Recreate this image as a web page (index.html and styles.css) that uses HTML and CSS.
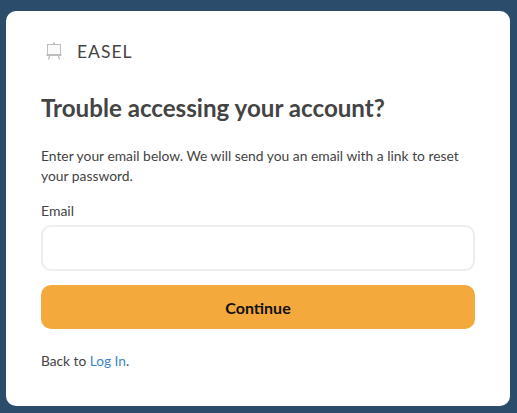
FILE: index.html
```html
<!DOCTYPE html>
<html lang="en">
  <head>
    <meta charset="UTF-8" />
    <title>Trouble accessing your account?</title>
    <link rel="stylesheet" href="styles.css">
  </head>
  <body>
    <div class="card">
      <div class="brand">
        <svg class="brand-icon" width="18" height="20" viewBox="0 0 18 20">
          <rect x="1.5" y="3.5" width="13" height="10" fill="#fafafa" stroke="#bdbdbd" />
          <rect x="7" y="1.5" width="2" height="2" fill="#bdbdbd" />
          <rect x="0.5" y="13" width="15" height="2" fill="#bdbdbd" />
          <path d="M3.5 15 L2.5 18.5 M12.5 15 L13.5 18.5" stroke="#bdbdbd" stroke-width="1.3" fill="none" />
        </svg>
        <span class="brand-name">EASEL</span>
      </div>
      <h1>Trouble accessing your account?</h1>
      <p class="intro">Enter your email below. We will send you an email with a link to reset your password.</p>
      <form>
        <label for="email">Email</label>
        <input type="email" id="email" />
        <button type="button" class="button">Continue</button>
      </form>
      <p class="back">Back to <a href="#">Log In</a>.</p>
    </div>
  </body>
</html>
```

FILE: styles.css
```css
html,
body {
  height: 100%;
}
body {
  font-family: Lato, sans-serif;
  background-color: #2c4c6b;
  color: #444444;
  margin: 0;
  padding: 11px 7px 7px 6px;
  box-sizing: border-box;
}
.card {
  background-color: #ffffff;
  border-radius: 10px;
  padding: 27px 35px 0 35px;
  height: 395px;
  box-sizing: border-box;
}
.brand {
  display: flex;
  align-items: center;
  height: 26px;
  padding-left: 5px;
}
.brand-icon {
  margin-right: 13px;
}
.brand-name {
  font-size: 17.5px;
  letter-spacing: 1px;
}
h1 {
  font-size: 24.15px;
  font-weight: 700;
  line-height: 30px;
  margin: 29px 0 0 0;
}
.intro {
  font-size: 13.85px;
  line-height: 20px;
  margin: 23px 0 0 0;
}
label {
  display: block;
  font-size: 14px;
  line-height: 18px;
  margin-top: 16px;
}
input {
  display: block;
  width: 100%;
  height: 46px;
  box-sizing: border-box;
  margin-top: 5px;
  border: 2px solid #eeeeee;
  border-radius: 10px;
  background-color: white;
}
.button {
  display: block;
  width: 100%;
  height: 44px;
  margin-top: 14px;
  border: 0;
  border-radius: 10px;
  background-color: #f3a93c;
  color: #111111;
  font-family: Lato, sans-serif;
  font-size: 16px;
  font-weight: 700;
}
.back {
  font-size: 13.7px;
  line-height: 20px;
  margin: 22px 0 0 0;
}
a {
  color: #3b87c9;
  text-decoration: none;
}
```
